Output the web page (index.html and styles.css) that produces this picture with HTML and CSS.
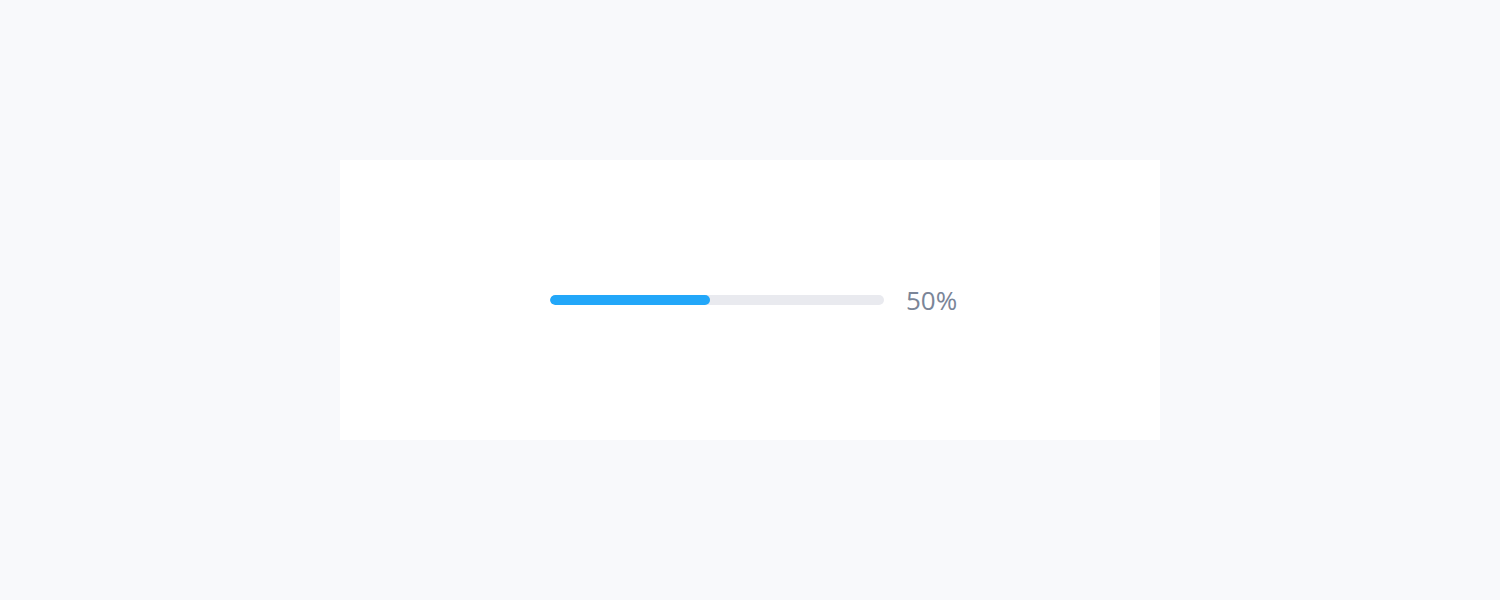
FILE: index.html
```html
<!DOCTYPE html>
<html>
<head>
<meta charset="utf-8">
<link rel="stylesheet" href="styles.css">
</head>
<body>
<div class="page">
  <div class="card">
    <div class="progress">
      <div class="track"><div class="fill" style="width: 48%"></div></div>
      <span class="label">50%</span>
    </div>
  </div>
</div>
</body>
</html>
```

FILE: styles.css
```css
html, body {
  margin: 0;
  padding: 0;
  background: #f8f9fb;
}
.page {
  height: 600px;
  display: flex;
  align-items: center;
  justify-content: center;
}
.card {
  width: 820px;
  height: 280px;
  background: #ffffff;
  display: flex;
  align-items: center;
  justify-content: center;
}
.progress {
  display: flex;
  align-items: center;
  width: 420px;
  padding-left: 10px;
  box-sizing: border-box;
}
.track {
  flex: none;
  width: 334px;
  height: 10px;
  border-radius: 5px;
  background: #e9eaef;
  overflow: hidden;
}
.fill {
  height: 100%;
  background: #22a7f9;
  border-radius: 5px;
}
.label {
  margin-left: 22px;
  font-family: "Open Sans", "Noto Sans", sans-serif;
  font-weight: 400;
  font-size: 26px;
  color: #7a8598;
  line-height: 1;
}
```
